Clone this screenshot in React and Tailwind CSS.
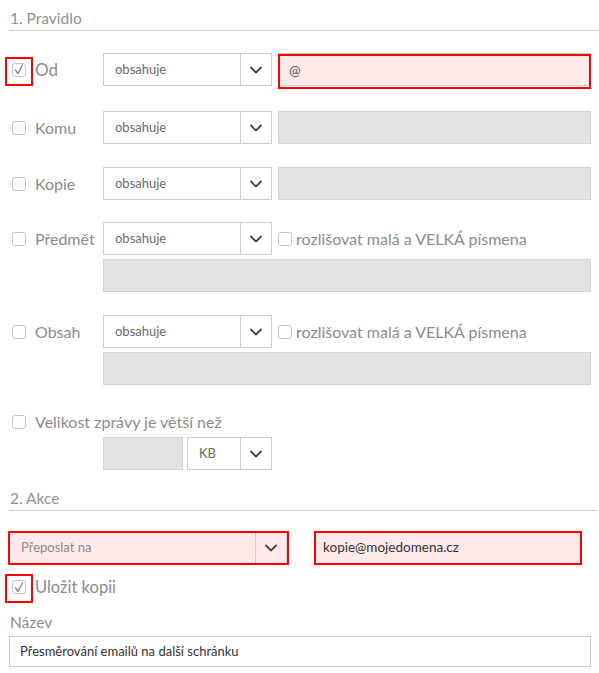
import React from "react";

const font = { fontFamily: "Lato, 'Open Sans', sans-serif" };

function Chevron() {
  return (
    <svg width="12" height="8" viewBox="0 0 12 8" fill="none">
      <path d="M1 1.5 L6 6.5 L11 1.5" stroke="#444" strokeWidth="1.8" strokeLinecap="round" strokeLinejoin="round" />
    </svg>
  );
}

function Check({ checked }) {
  return (
    <span className="flex h-[14px] w-[14px] shrink-0 items-center justify-center rounded-[3px] border border-[#c4c4c4] bg-white">
      {checked && (
        <svg width="10" height="11" viewBox="0 0 10 11" fill="none">
          <path d="M1.5 6 L4 9.5 L8.5 1" stroke="#7488a6" strokeWidth="1.4" strokeLinecap="round" strokeLinejoin="round" />
        </svg>
      )}
    </span>
  );
}

function Select({ value, w = "w-[169px]", pink = false, textCls = "text-[#6a6a6a]" }) {
  return (
    <div className={`flex h-[33px] ${w} shrink-0 items-stretch border border-[#ccc] ${pink ? "bg-[#ffe9e9]" : "bg-white"}`}>
      <div className={`flex flex-1 items-center pl-[11px] text-[13px] ${textCls}`}>{value}</div>
      <div className="flex w-[31px] items-center justify-center border-l border-[#ccc]">
        <Chevron />
      </div>
    </div>
  );
}

function RedBox({ className }) {
  return <div className={`pointer-events-none absolute border-[2px] border-[#ff0000] ${className}`} />;
}

function CheckCell({ checked, red }) {
  return (
    <div className="relative flex w-[26px] shrink-0 pl-[12px]">
      <Check checked={checked} />
      {red && <RedBox className="left-[5px] top-[-6px] h-[29px] w-[28px]" />}
    </div>
  );
}

function Row({ label, checked, children }) {
  return (
    <div className="flex items-center">
      <CheckCell checked={checked} red={checked} />
      <div className={`w-[77px] shrink-0 pl-[9px] ${checked ? "text-[17px]" : "text-[16px]"} leading-[20px] text-[#8c8c8c]`}>{label}</div>
      {children}
    </div>
  );
}

function CaseOption() {
  return (
    <div className="ml-[6px] flex items-center gap-[4px]">
      <Check />
      <span className="text-[16px] leading-[20px] text-[#8c8c8c]">rozlišovat malá a VELKÁ písmena</span>
    </div>
  );
}

export default function App() {
  return (
    <div className="w-[599px] bg-white pr-[8px]" style={font}>
      <div className="pl-[10px] pt-[8px] text-[15.5px] leading-[20px] text-[#919191]">1. Pravidlo</div>
      <div className="ml-[9px] mr-[-8px] mt-[2px] border-t border-[#cfcfcf]" />

      <div className="mt-[22px]">
        <Row label="Od" checked>
          <Select value="obsahuje" />
          <div className="relative ml-[6px] flex h-[33px] flex-1 items-center border border-[#ccc] bg-[#ffe9e9] pl-[10px] text-[14px] text-[#555]">
            @
            <RedBox className="left-[-1px] top-0 h-[35px] w-[313px]" />
          </div>
        </Row>
      </div>

      <div className="mt-[25px]">
        <Row label="Komu">
          <Select value="obsahuje" />
          <div className="ml-[6px] h-[33px] flex-1 border border-[#d4d4d4] bg-[#e2e2e2]" />
        </Row>
      </div>

      <div className="mt-[23px]">
        <Row label="Kopie">
          <Select value="obsahuje" />
          <div className="ml-[6px] h-[33px] flex-1 border border-[#d4d4d4] bg-[#e2e2e2]" />
        </Row>
      </div>

      <div className="mt-[22px]">
        <Row label="Předmět">
          <Select value="obsahuje" />
          <CaseOption />
        </Row>
        <div className="ml-[103px] mt-[4px] h-[33px] border border-[#d4d4d4] bg-[#e2e2e2]" />
      </div>

      <div className="mt-[23px]">
        <Row label="Obsah">
          <Select value="obsahuje" />
          <CaseOption />
        </Row>
        <div className="ml-[103px] mt-[4px] h-[33px] border border-[#d4d4d4] bg-[#e2e2e2]" />
      </div>

      <div className="mt-[27px] flex items-center">
        <CheckCell />
        <div className="pl-[9px] text-[16px] leading-[20px] text-[#8c8c8c]">Velikost zprávy je větší než</div>
      </div>
      <div className="ml-[103px] mt-[5px] flex items-center">
        <div className="h-[33px] w-[80px] border border-[#d4d4d4] bg-[#e2e2e2]" />
        <div className="ml-[4px]">
          <Select value="KB" w="w-[85px]" />
        </div>
      </div>

      <div className="mt-[18px] pl-[10px] text-[15.5px] leading-[20px] text-[#919191]">2. Akce</div>
      <div className="ml-[9px] mr-[-6px] mt-[2px] border-t border-[#cfcfcf]" />

      <div className="mt-[20px] flex items-center">
        <div className="relative ml-[9px]">
          <Select value="Přeposlat na" w="w-[278px]" pink textCls="text-[#8c8c8c]" />
          <RedBox className="left-[-1px] top-0 h-[34px] w-[281px]" />
        </div>
        <div className="relative ml-[27px] flex h-[33px] w-[268px] items-center bg-[#ffe9e9] pl-[9px] text-[13.5px] text-[#333]">
          kopie@mojedomena.cz
          <RedBox className="left-0 top-0 h-[34px] w-[268px]" />
        </div>
      </div>

      <div className="mt-[13px] flex items-center">
        <CheckCell checked red />
        <div className="pl-[9px] text-[16.5px] leading-[20px] text-[#8c8c8c]">Uložit kopii</div>
      </div>

      <div className="mt-[15px] pl-[10px] text-[15.5px] leading-[20px] text-[#8c8c8c]">Název</div>
      <div className="ml-[9px] mt-[4px] flex h-[31px] items-center border border-[#ccc] bg-white pl-[10px] text-[13px] text-[#333]">
        Přesměrování emailů na další schránku
      </div>
      <div className="h-[7px]" />
    </div>
  );
}
